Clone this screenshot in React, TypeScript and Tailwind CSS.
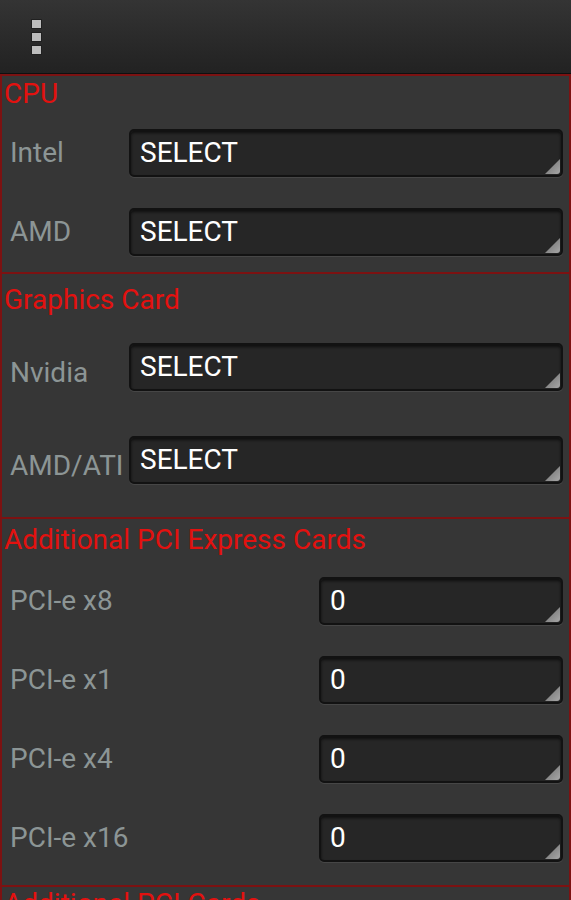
import React from 'react';

const FONT = { fontFamily: 'Roboto, "Noto Sans", sans-serif' };

function Picker({ value }: { value: string }) {
  return (
    <div className="relative flex-1 h-[48px] rounded-[5px] border-2 border-[#121212] bg-[#262626] shadow-[0_1px_0_#464646,inset_0_2px_3px_rgba(0,0,0,0.6)] flex items-center pl-[9px]">
      <span className="text-[28px] leading-none text-white">{value}</span>
      <div className="absolute right-[1px] bottom-[1px] w-[15px] h-[15px] bg-gradient-to-br from-[#6a6a6a] to-[#a8a8a8] [clip-path:polygon(100%_0,100%_100%,0_100%)] rounded-br-[3px]" />
    </div>
  );
}

function Row({ label, value, labelWidth, mt, drop }: { label: string; value: string; labelWidth: string; mt: string; drop?: boolean }) {
  return (
    <div className={`flex items-center ${mt}`}>
      <div className={`${labelWidth} shrink-0 pl-[8px] text-[28px] text-[#8c9595] leading-none ${drop ? 'pt-[11px]' : ''}`}>{label}</div>
      <Picker value={value} />
    </div>
  );
}

function Title({ children }: { children: React.ReactNode }) {
  return <div className="pl-[2px] text-[28px] leading-[30px] text-[#e3110f]">{children}</div>;
}

export default function App() {
  return (
    <div className="w-[571px] h-[900px] overflow-hidden bg-[#363636]" style={FONT}>
      <div className="h-[74px] bg-gradient-to-b from-[#343434] to-[#222222] border-b border-[#101010] flex items-center pl-[31px]">
        <div className="flex flex-col gap-[3px]">
          <div className="w-[11px] h-[10px] bg-[#bdbdbd] border border-[#202020]" />
          <div className="w-[11px] h-[10px] bg-[#bdbdbd] border border-[#202020]" />
          <div className="w-[11px] h-[10px] bg-[#bdbdbd] border border-[#202020]" />
        </div>
      </div>

      <div className="border-2 border-[#7c1212] pt-[3px] pb-[16px] pr-[6px]">
        <Title>CPU</Title>
        <Row label="Intel" value="SELECT" labelWidth="w-[127px]" mt="mt-[20px]" />
        <Row label="AMD" value="SELECT" labelWidth="w-[127px]" mt="mt-[31px]" />
      </div>

      <div className="border-2 border-t-0 border-[#7c1212] pt-[11px] pb-[33px] pr-[6px]">
        <Title>Graphics Card</Title>
        <Row label="Nvidia" value="SELECT" labelWidth="w-[127px]" mt="mt-[28px]" drop />
        <Row label="AMD/ATI" value="SELECT" labelWidth="w-[127px]" mt="mt-[45px]" drop />
      </div>

      <div className="border-2 border-t-0 border-[#7c1212] pt-[6px] pb-[23px] pr-[6px]">
        <Title>Additional PCI Express Cards</Title>
        <Row label="PCI-e x8" value="0" labelWidth="w-[317px]" mt="mt-[22px]" />
        <Row label="PCI-e x1" value="0" labelWidth="w-[317px]" mt="mt-[31px]" />
        <Row label="PCI-e x4" value="0" labelWidth="w-[317px]" mt="mt-[31px]" />
        <Row label="PCI-e x16" value="0" labelWidth="w-[317px]" mt="mt-[31px]" />
      </div>

      <div className="border-2 border-t-0 border-[#7c1212] pt-[2px] h-[60px]">
        <Title>Additional PCI Cards</Title>
      </div>
    </div>
  );
}
